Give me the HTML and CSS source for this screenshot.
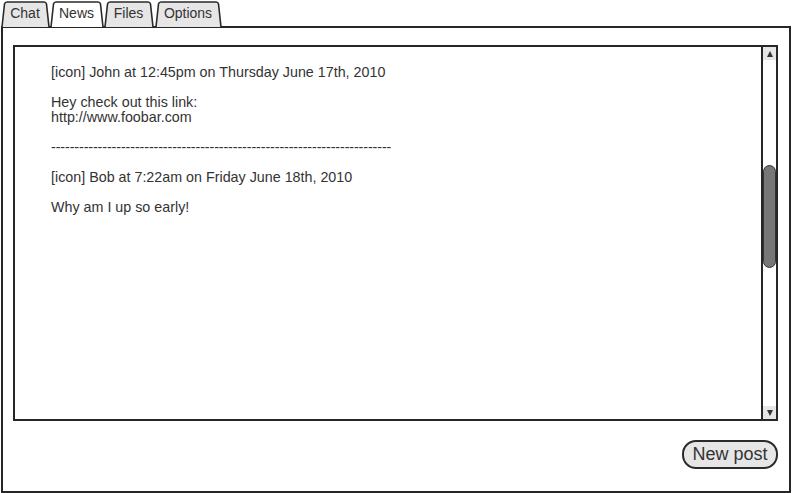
FILE: index.html
```html
<!DOCTYPE html>
<html>
<head>
<meta charset="utf-8">
<link rel="stylesheet" href="styles.css">
</head>
<body>
<div class="tabs">
  <div class="tab tab-chat">
    <svg class="tab-shape" width="49" height="27" viewBox="0 0 49 27"><path d="M1 27 L3.5 4 Q4 2 6 2 L43 2 Q45 2 45.5 4 L48 27" /></svg>
    <span class="tab-label">Chat</span>
  </div>
  <div class="tab tab-news active">
    <svg class="tab-shape" width="54" height="27" viewBox="0 0 54 27"><path d="M1 27 L3.5 4 Q4 2 6 2 L48 2 Q50 2 50.5 4 L53 27" /></svg>
    <span class="tab-label">News</span>
  </div>
  <div class="tab tab-files">
    <svg class="tab-shape" width="50" height="27" viewBox="0 0 50 27"><path d="M1 27 L3.5 4 Q4 2 6 2 L44 2 Q46 2 46.5 4 L49 27" /></svg>
    <span class="tab-label">Files</span>
  </div>
  <div class="tab tab-options">
    <svg class="tab-shape" width="67" height="27" viewBox="0 0 67 27"><path d="M1 27 L3.5 4 Q4 2 6 2 L61 2 Q63 2 63.5 4 L66 27" /></svg>
    <span class="tab-label">Options</span>
  </div>
</div>
<div class="panel">
  <div class="feed">
    <div class="feed-text">
      <p>[icon] John at 12:45pm on Thursday June 17th, 2010</p>
      <p>Hey check out this link:<br>http://www.foobar.com</p>
      <p class="rule">-------------------------------------------------------------------------</p>
      <p>[icon] Bob at 7:22am on Friday June 18th, 2010</p>
      <p>Why am I up so early!</p>
    </div>
    <div class="scrollbar">
      <div class="arrow arrow-up"><span class="tri tri-up"></span></div>
      <div class="track"><div class="thumb"></div></div>
      <div class="arrow arrow-down"><span class="tri tri-down"></span></div>
    </div>
  </div>
  <div class="actions">
    <button class="btn">New post</button>
  </div>
</div>
</body>
</html>
```

FILE: styles.css
```css
* { box-sizing: border-box; }
html, body { margin: 0; padding: 0; background: #fff; }
body {
  width: 792px;
  height: 493px;
  font-family: "Liberation Sans", Arial, sans-serif;
  color: #333;
  overflow: hidden;
}
.tabs {
  display: flex;
  height: 26px;
  padding-left: 1px;
}
.tab {
  position: relative;
  height: 26px;
  display: flex;
  justify-content: center;
  align-items: center;
  font-size: 14px;
  color: #333;
}
.tab-chat { width: 49px; }
.tab-news { width: 54px; }
.tab-files { width: 50px; }
.tab-options { width: 67px; margin-left: 1px; }
.tab-shape {
  position: absolute;
  left: 0;
  top: 0;
}
.tab-shape path {
  fill: #e6e6e6;
  stroke: #2a2a2a;
  stroke-width: 1.6;
  stroke-linejoin: round;
}
.tab.active .tab-shape path { fill: #fff; }
.tab-label {
  position: relative;
  margin-left: -1px;
  line-height: 16px;
}
.panel {
  margin-left: 1px;
  width: 790px;
  height: 467px;
  border: 2px solid #262626;
  display: flex;
  flex-direction: column;
  padding: 17px 11px 0 10px;
}
.feed {
  height: 376px;
  border: 2px solid #262626;
  display: flex;
}
.feed-text {
  flex: 1;
  padding: 18px 36px;
  font-size: 14.3px;
  line-height: 15px;
  color: #333;
}
.feed-text p { margin: 0 0 15px 0; white-space: nowrap; }
.feed-text .rule { letter-spacing: -0.1px; }
.scrollbar {
  width: 15px;
  border-left: 2px solid #262626;
  display: flex;
  flex-direction: column;
}
.arrow {
  height: 13px;
  background: #e6e6e6;
  display: flex;
  align-items: center;
  justify-content: center;
}
.tri {
  width: 0;
  height: 0;
  border-left: 3px solid transparent;
  border-right: 3px solid transparent;
}
.tri-up { border-bottom: 6px solid #333; }
.tri-down { border-top: 6px solid #333; }
.track {
  flex: 1;
  position: relative;
}
.thumb {
  position: absolute;
  left: 0;
  right: 0;
  top: 105px;
  height: 103px;
  background: #777;
  border: 1px solid #333;
  border-radius: 7px;
}
.actions {
  display: flex;
  justify-content: flex-end;
  margin-top: 19px;
}
.btn {
  width: 96px;
  height: 29px;
  border: 2px solid #2a2a2a;
  border-radius: 14px;
  background: #e6e6e6;
  font-family: "Liberation Sans", Arial, sans-serif;
  font-size: 18px;
  color: #333;
  padding: 0;
  line-height: 25px;
}
```
